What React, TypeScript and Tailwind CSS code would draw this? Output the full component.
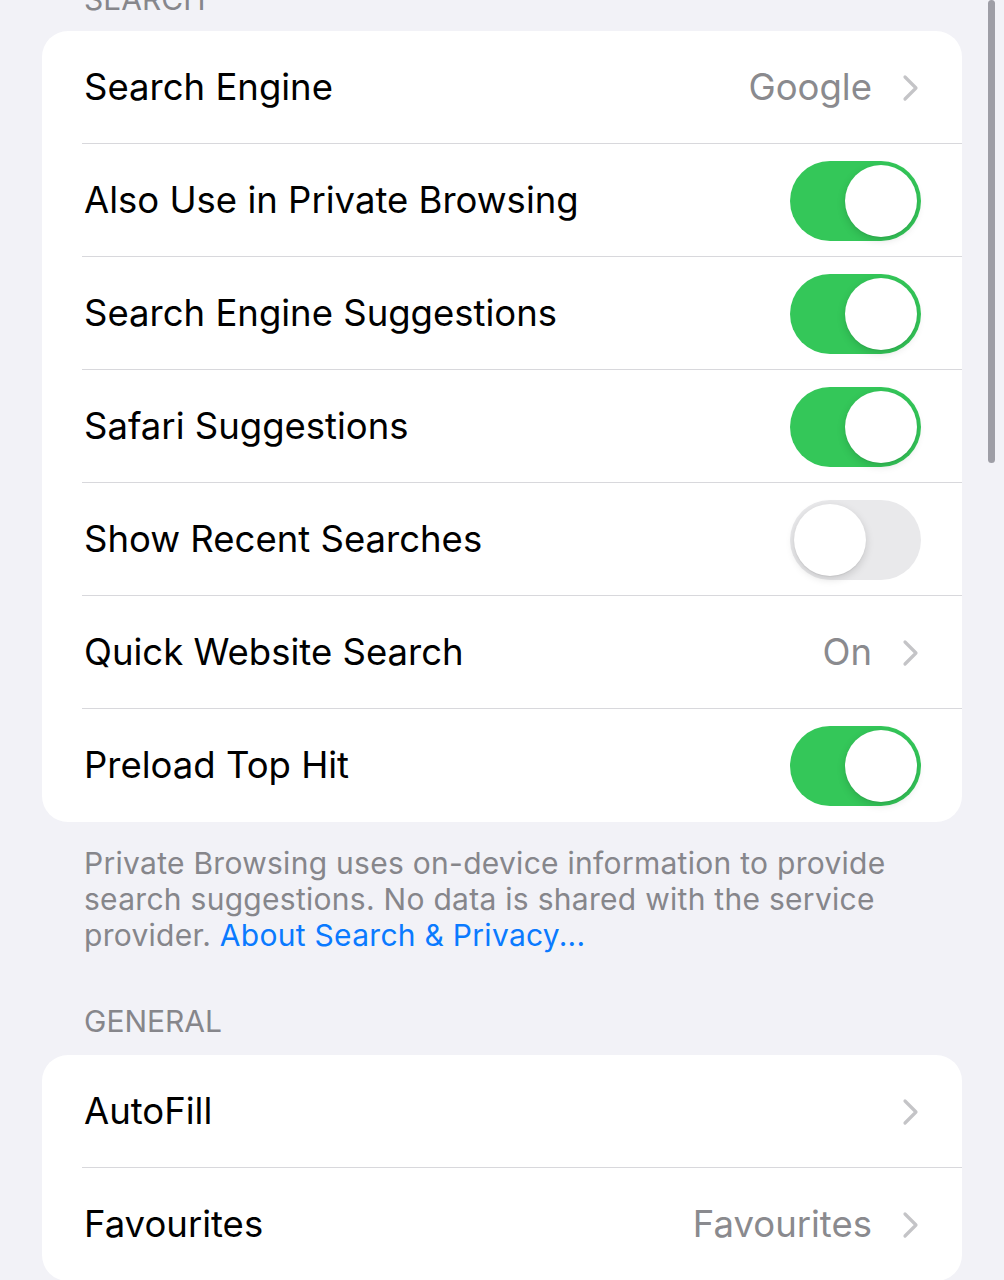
import React from "react";

type Row =
  | { label: string; kind: "link"; value?: string }
  | { label: string; kind: "toggle"; on: boolean };

const searchRows: Row[] = [
  { label: "Search Engine", kind: "link", value: "Google" },
  { label: "Also Use in Private Browsing", kind: "toggle", on: true },
  { label: "Search Engine Suggestions", kind: "toggle", on: true },
  { label: "Safari Suggestions", kind: "toggle", on: true },
  { label: "Show Recent Searches", kind: "toggle", on: false },
  { label: "Quick Website Search", kind: "link", value: "On" },
  { label: "Preload Top Hit", kind: "toggle", on: true },
];

const generalRows: Row[] = [
  { label: "AutoFill", kind: "link" },
  { label: "Favourites", kind: "link", value: "Favourites" },
];

function Chevron() {
  return (
    <svg width="17" height="28" viewBox="0 0 17 28" fill="none" className="ml-[30px]">
      <path d="M3 3 L14 14 L3 25" stroke="#c4c4c7" strokeWidth="3.2" strokeLinecap="round" strokeLinejoin="round" />
    </svg>
  );
}

function Toggle({ on }: { on: boolean }) {
  return (
    <div
      className={`flex h-[80px] w-[131px] items-center rounded-full p-[4px] ${
        on ? "justify-end bg-[#34c759]" : "justify-start bg-[#e9e9eb]"
      }`}
    >
      <div className="h-[72px] w-[72px] rounded-full bg-white shadow-[0_3px_8px_rgba(0,0,0,0.15),0_1px_1px_rgba(0,0,0,0.06)]" />
    </div>
  );
}

function SettingsRow({ row, last }: { row: Row; last: boolean }) {
  return (
    <div className="relative flex h-[113px] items-center justify-between pl-[42px] pr-[41px]">
      <span className="text-[36.5px] text-black">{row.label}</span>
      {row.kind === "toggle" ? (
        <Toggle on={row.on} />
      ) : (
        <div className="flex items-center pr-[2px]">
          {row.value && <span className="text-[36.5px] text-[#8a8a8e]">{row.value}</span>}
          <Chevron />
        </div>
      )}
      {!last && <div className="absolute bottom-0 left-[40px] right-0 h-px bg-[#d8d8dc]" />}
    </div>
  );
}

function Group({ rows }: { rows: Row[] }) {
  return (
    <div className="overflow-hidden rounded-[26px] bg-white">
      {rows.map((r, i) => (
        <SettingsRow key={r.label} row={r} last={i === rows.length - 1} />
      ))}
    </div>
  );
}

export default function App() {
  return (
    <div
      className="relative h-[1280px] w-[1004px] overflow-hidden bg-[#f2f2f7]"
      style={{ fontFamily: "Inter, 'Noto Sans', sans-serif" }}
    >
      <div className="flex flex-col px-[42px]">
        <div className="-mt-[21px] mb-[12px] pl-[42px] text-[30px] leading-[40px] text-[#86868b]">SEARCH</div>
        <Group rows={searchRows} />
        <p className="mt-[23px] pl-[42px] pr-[30px] text-[30px] leading-[36px] tracking-[0.28px] text-[#86868b]">
          Private Browsing uses on-device information to provide search suggestions. No data is shared with the
          service provider. <span className="text-[#0a7aff]">About Search &amp; Privacy...</span>
        </p>
        <div className="mt-[48px] mb-[14px] pl-[42px] text-[30px] leading-[40px] text-[#86868b]">GENERAL</div>
        <Group rows={generalRows} />
      </div>
      <div className="absolute right-[9px] top-0 h-[463px] w-[7px] rounded-full bg-[#9e9ea6]" />
    </div>
  );
}
